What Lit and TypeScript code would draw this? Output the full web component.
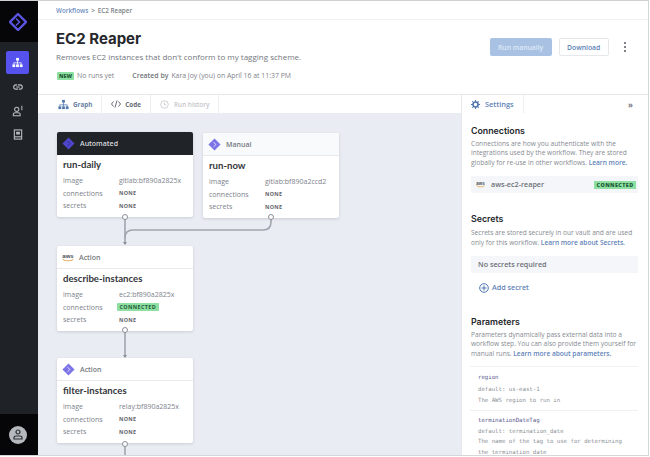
import { LitElement, html, css, svg } from "lit";
import { customElement } from "lit/decorators.js";

type Node = {
  x: number;
  y: number;
  kind: string;
  name: string;
  image: string;
  icon: "diamond" | "aws";
  dark?: boolean;
  connected?: boolean;
  manual?: boolean;
};

const NODES: Node[] = [
  { x: 19, y: 19, kind: "Automated", name: "run-daily", image: "gitlab:bf890a2825x", icon: "diamond", dark: true },
  { x: 165, y: 20, kind: "Manual", name: "run-now", image: "gitlab:bf890a2ccd2", icon: "diamond", manual: true },
  { x: 19, y: 133, kind: "Action", name: "describe-instances", image: "ec2:bf890a2825x", icon: "aws", connected: true },
  { x: 19, y: 245, kind: "Action", name: "filter-instances", image: "relay:bf890a2825x", icon: "diamond" },
];

const diamond = (fill: string, inner: string) => html`<svg width="13" height="13" viewBox="0 0 14 14">
  <path d="M7 .5 13.500 7 7 13.500.5 7z" fill=${fill}></path>
  <path d="M6 4.500 8.500 7 6 9.500" fill="none" stroke=${inner} stroke-width="1"></path>
</svg>`;

const aws = (w = 12) => html`<svg width=${w} height=${w * 0.75} viewBox="0 0 16 12">
  <text x="8" y="7" text-anchor="middle" font-family="Liberation Sans, sans-serif" font-size="8" font-weight="700" fill="#4d5057">aws</text>
  <path d="M1 8.500c4 2.600 10 2.600 14 0" fill="none" stroke="#e0a24a" stroke-width="1.400"></path>
</svg>`;

const graphIcon = (fill: string) => html`<svg width="11" height="11" viewBox="0 0 12 12" fill=${fill}>
  <rect x="4.500" y="1" width="3" height="3"></rect>
  <rect x="0.500" y="8" width="3" height="3"></rect>
  <rect x="4.500" y="8" width="3" height="3"></rect>
  <rect x="8.500" y="8" width="3" height="3"></rect>
  <path d="M5.600 4h.8v2h4v2h-.8V6.800H6.400V8h-.8V6.800H2.400V8h-.8V6h4z"></path>
</svg>`;

@customElement("workflow-node")
class WorkflowNode extends LitElement {
  static properties = { data: { attribute: false } };
  data!: Node;

  static styles = css`
    :host {
      display: block;
      width: 136px;
      height: 85px;
      background: #fff;
      border-radius: 2px;
      box-shadow: 0 1px 3px rgba(60, 70, 90, 0.18);
      font-family: "Open Sans", sans-serif;
      font-size: 7px;
      color: #7c828c;
    }
    .head {
      height: 22px;
      display: flex;
      align-items: center;
      gap: 5px;
      padding: 0 5px;
      border-bottom: 1px solid #e8eaee;
      font-weight: 600;
      font-size: 7px;
      color: #75797f;
      border-radius: 2px 2px 0 0;
    }
    .head.dark {
      background: #202327;
      color: #d6d8dc;
      border-bottom-color: #202327;
    }
    .head.manual {
      background: #f8fafc;
    }
    .name {
      font-family: "Lato", sans-serif;
      font-weight: 700;
      font-size: 9.600px;
      color: #33363b;
      margin: 3px 6px 2px;
      line-height: 14px;
    }
    .row {
      display: grid;
      grid-template-columns: 56px 1fr;
      align-items: center;
      height: 12.700px;
      padding: 0 6px;
    }
    .none {
      font-size: 5.400px;
      font-weight: 700;
      letter-spacing: 0.3px;
      color: #5f636a;
    }
    .conn {
      justify-self: start;
      margin-left: -2px;
      padding: 1px 2.500px;
      line-height: 6px;
      background: #8ee0a2;
      border-radius: 1px;
      font-size: 5.400px;
      font-weight: 700;
      letter-spacing: 0.4px;
      color: #225c36;
    }
  `;

  render() {
    const d = this.data;
    const icon =
      d.icon === "aws"
        ? aws()
        : d.dark
          ? diamond("#4e46c8", "#2f2a8c")
          : diamond("#7b73e6", "#f0efff");
    return html`
      <div class="head ${d.dark ? "dark" : ""} ${d.manual ? "manual" : ""}">${icon}<span>${d.kind}</span></div>
      <div class="name">${d.name}</div>
      <div class="row"><span>image</span><span>${d.image}</span></div>
      <div class="row">
        <span>connections</span>
        ${d.connected ? html`<span class="conn">CONNECTED</span>` : html`<span class="none">NONE</span>`}
      </div>
      <div class="row"><span>secrets</span><span class="none">NONE</span></div>
    `;
  }
}

@customElement("app-root")
class AppRoot extends LitElement {
  static styles = css`
    :host {
      display: block;
      width: 650px;
      height: 457px;
      overflow: hidden;
      background: #fff;
      font-family: "Open Sans", sans-serif;
    }
    .frame {
      width: 649px;
      height: 455px;
      margin-top: 1px;
      display: grid;
      grid-template-columns: 38px minmax(0, 1fr);
      grid-template-rows: minmax(0, 1fr);
      border-right: 1px solid #d4d6da;
      border-bottom: 1px solid #d4d6da;
      box-sizing: border-box;
      box-shadow: 0 -1px 0 #cfd1d5;
    }
    .side {
      background: #1f2327;
      display: flex;
      flex-direction: column;
      align-items: center;
    }
    .logo,
    .account {
      width: 100%;
      height: 41px;
      background: #060608;
      display: flex;
      align-items: center;
      justify-content: center;
      flex: none;
      padding-right: 3px;
      box-sizing: border-box;
    }
    .nav {
      flex: 1;
      display: flex;
      flex-direction: column;
      align-items: center;
      padding: 9px 3px 0 0;
      gap: 1px;
    }
    .nav-item {
      width: 23px;
      height: 23px;
      display: flex;
      align-items: center;
      justify-content: center;
      border-radius: 2px;
    }
    .nav-item.on {
      background: #5552ee;
    }
    .avatar {
      width: 18px;
      height: 18px;
      border-radius: 50%;
      background: #b5b8bd;
      display: flex;
      align-items: center;
      justify-content: center;
    }
    .main {
      min-width: 0;
      min-height: 0;
      display: flex;
      flex-direction: column;
    }
    .crumbs {
      height: 19px;
      box-sizing: border-box;
      padding: 1px 0 0 18px;
      flex: none;
      display: flex;
      align-items: center;
      gap: 3px;
      border-bottom: 1px solid #eef0f3;
      font-size: 6.300px;
      font-weight: 600;
      color: #7a7f87;
    }
    .crumbs a {
      color: #6f8fc0;
    }
    .header {
      height: 75px;
      flex: none;
      display: flex;
      justify-content: space-between;
      padding: 10px 18px 0;
      box-sizing: border-box;
      border-bottom: 1px solid #e6e8ec;
    }
    h1 {
      margin: 0;
      font-family: "Inter", sans-serif;
      font-size: 15px;
      line-height: 18px;
      font-weight: 700;
      color: #26282c;
    }
    .desc {
      margin-top: 3px;
      font-size: 8px;
      line-height: 12px;
      color: #73777e;
    }
    .meta {
      margin-top: 8px;
      display: flex;
      align-items: center;
      font-size: 6.900px;
      line-height: 10px;
      color: #7f838a;
    }
    .new {
      background: #8ee0a2;
      color: #225c36;
      font-size: 5.400px;
      font-weight: 800;
      line-height: 7px;
      padding: 0.5px 2px;
      margin-left: 1px;
      margin-right: 3px;
      border-radius: 1px;
    }
    .meta b {
      margin-left: 18px;
      margin-right: 3px;
      font-weight: 600;
      color: #6f7379;
    }
    .actions {
      display: flex;
      align-items: center;
      align-self: flex-start;
      margin-top: 8px;
    }
    .btn {
      height: 18px;
      display: flex;
      align-items: center;
      justify-content: center;
      box-sizing: border-box;
      border-radius: 2px;
      font-size: 6.800px;
      font-weight: 600;
    }
    .btn.run {
      width: 62px;
      background: #a9c2e3;
      color: #dfe9f6;
    }
    .btn.dl {
      width: 50px;
      margin-left: 7px;
      border: 1px solid #e5e7ea;
      color: #5a7fb5;
    }
    .more {
      margin-left: 15px;
      margin-right: 4px;
      display: flex;
      flex-direction: column;
      gap: 1.600px;
    }
    .more i {
      width: 2.400px;
      height: 2.400px;
      border-radius: 50%;
      background: #55595f;
    }
    .tabs {
      height: 18px;
      flex: none;
      display: grid;
      grid-template-columns: 423px 1fr;
      font-size: 6.300px;
      font-weight: 700;
    }
    .tab-left,
    .tab-right {
      display: flex;
    }
    .tab-right {
      border-left: 1px solid #e6e8ec;
    }
    .tab {
      display: flex;
      align-items: center;
      gap: 4px;
      padding: 0 9px 0 20px;
      border-right: 1px solid #eceef1;
      color: #6a7fa4;
    }
    .tab.code {
      padding: 0 9px;
      color: #656a72;
    }
    .tab.off {
      padding: 0 9px;
      gap: 5px;
      font-size: 6.400px;
      font-weight: 600;
      color: #c3c6cb;
    }
    .tab.settings {
      padding: 0 9px;
      gap: 5px;
      font-size: 7.400px;
      font-weight: 600;
      color: #5f83b8;
    }
    .collapse {
      margin-left: auto;
      padding-right: 15px;
      align-self: center;
      color: #70747b;
      font-size: 8px;
    }
    .body {
      flex: 1;
      min-height: 0;
      display: grid;
      grid-template-columns: 423px minmax(0, 1fr);
    }
    .canvas {
      position: relative;
      background: #e9ecf2;
      overflow: hidden;
    }
    .canvas workflow-node {
      position: absolute;
    }
    .canvas svg.links {
      position: absolute;
      inset: 0;
    }
    .panel {
      padding: 12px 10px 0 8px;
      overflow: hidden;
      border-left: 1px solid #e6e8ec;
      font-size: 6.600px;
      line-height: 9.400px;
      color: #868a91;
    }
    h2 {
      margin: 0 0 2px 1px;
      font-family: "Inter", sans-serif;
      font-size: 8.800px;
      line-height: 12px;
      font-weight: 600;
      color: #25272b;
    }
    p {
      margin: 0 0 0 1px;
      white-space: nowrap;
    }
    .link {
      color: #5f83b8;
      font-weight: 600;
    }
    .strip {
      height: 17px;
      margin: 9px 0 0 1px;
      background: #f4f6f9;
      display: flex;
      align-items: center;
      font-weight: 600;
      font-size: 7.200px;
      color: #6c7077;
      padding: 0 2px 0 5px;
    }
    .strip span.label {
      margin-left: 6px;
    }
    .strip .conn {
      margin-left: auto;
      background: #8ee0a2;
      color: #225c36;
      font-size: 5.400px;
      font-weight: 800;
      letter-spacing: 0.4px;
      padding: 1px 2.500px;
      line-height: 6px;
    }
    .secrets {
      margin-top: 20px;
    }
    .secrets h2 {
      margin-bottom: 3px;
    }
    .none-row {
      margin-top: 9px;
    }
    .none-row span {
      margin-left: 2px;
    }
    .add {
      display: flex;
      align-items: center;
      gap: 3px;
      margin: 10px 0 0 9px;
      font-weight: 600;
      font-size: 7.200px;
      color: #5f83b8;
    }
    .params {
      margin-top: 23px;
    }
    .param {
      border-top: 1px solid #eff1f4;
      padding: 4px 8px 0;
      font-family: "DejaVu Sans Mono", monospace;
      font-size: 5.700px;
      line-height: 10.600px;
      color: #8c9096;
      white-space: nowrap;
    }
    .param.first {
      margin-top: 8px;
      padding: 5px 8px 4px;
      line-height: 11.300px;
    }
    .param .key {
      color: #5b5a8e;
    }
  `;

  renderLinks() {
    const arrow = (x: number, y: number) =>
      svg`<path d="M${x - 2} ${y - 2}h4l-2 3z" fill="#8a8f97" stroke="none"></path>`;
    return svg`<svg class="links" width="423" height="342" fill="none" stroke="#a0a5ad" stroke-width="1.600">
      <path d="M87 104V130"></path>
      <path d="M233 104v5q0 8-8 8H95q-8 0-8 8"></path>
      <path d="M87 217V243"></path>
      <path d="M87 331V342"></path>
      ${arrow(87, 131)}${arrow(87, 244)}
    </svg>`;
  }

  renderRings() {
    const spots = [[87, 104], [233, 104], [87, 217], [87, 331]];
    return svg`<svg class="links" width="423" height="342" fill="#fff" stroke="#8a8f97" stroke-width="1">
      ${spots.map(([x, y]) => svg`<circle cx=${x} cy=${y} r="2.500"></circle>`)}
    </svg>`;
  }

  render() {
    return html`
      <div class="frame">
        <aside class="side">
          <div class="logo">
            <svg width="18" height="18" viewBox="0 0 18 18">
              <path d="M9 1 17 9 9 17 1 9z" fill="none" stroke="#5a55e0" stroke-width="2.400"></path>
              <path d="M7 5.500 10.500 9 7 12.500" fill="none" stroke="#5a55e0" stroke-width="1.600"></path>
            </svg>
          </div>
          <nav class="nav">
            <div class="nav-item on">${graphIcon("#fff")}</div>
            <div class="nav-item">
              <svg width="12" height="10" viewBox="0 0 14 10" fill="none" stroke="#b9bcc1" stroke-width="1.300">
                <path d="M6 2.500H4.500a2.500 2.500 0 0 0 0 5H7"></path>
                <path d="M8 7.500h1.500a2.500 2.500 0 0 0 0-5H7"></path>
                <path d="M5 5h4"></path>
              </svg>
            </div>
            <div class="nav-item">
              <svg width="12" height="12" viewBox="0 0 14 14" fill="none" stroke="#b9bcc1" stroke-width="1.200">
                <circle cx="5.500" cy="5" r="2.500"></circle>
                <path d="M1.500 12.500v-1.500q0-2 2.500-2h3q2.500 0 2.500 2v1.500z"></path>
                <path d="M11.500 1v5"></path>
              </svg>
            </div>
            <div class="nav-item">
              <svg width="10" height="11" viewBox="0 0 10 12" fill="none" stroke="#b9bcc1" stroke-width="1.200">
                <rect x="1" y="1" width="8" height="10"></rect>
                <rect x="3" y="3" width="4" height="3" fill="#b9bcc1" stroke="none"></rect>
                <path d="M1 8.500h8"></path>
              </svg>
            </div>
          </nav>
          <div class="account">
            <div class="avatar">
              <svg width="10" height="11" viewBox="0 0 10 11" fill="none" stroke="#2a2d31" stroke-width="1.200">
                <circle cx="5" cy="3" r="2"></circle>
                <path d="M1 10V8.500Q1 7 3 7h4q2 0 2 1.500V10z"></path>
              </svg>
            </div>
          </div>
        </aside>
        <main class="main">
          <div class="crumbs"><a>Workflows</a><span>&gt;</span><span>EC2 Reaper</span></div>
          <header class="header">
            <div>
              <h1>EC2 Reaper</h1>
              <div class="desc">Removes EC2 instances that don't conform to my tagging scheme.</div>
              <div class="meta">
                <span class="new">NEW</span>No runs yet<b>Created by</b>Kara Joy (you) on April 16 at 11:37 PM
              </div>
            </div>
            <div class="actions">
              <div class="btn run">Run manually</div>
              <div class="btn dl">Download</div>
              <div class="more"><i></i><i></i><i></i></div>
            </div>
          </header>
          <div class="tabs">
            <div class="tab-left">
              <div class="tab">${graphIcon("#4f75ad")} Graph</div>
              <div class="tab code">
                <svg width="10" height="8" viewBox="0 0 10 8" fill="none" stroke="#555a62" stroke-width="0.900">
                  <path d="M2.500 1.500 .5 4l2 2.500M7.500 1.500 9.500 4l-2 2.500M6 .5 4 7.500"></path>
                </svg>
                Code
              </div>
              <div class="tab off">
                <svg width="9" height="9" viewBox="0 0 10 10" fill="none" stroke="#c3c6cb" stroke-width="0.900">
                  <circle cx="5" cy="5" r="4.200"></circle>
                  <path d="M5 2.500V5.500H7"></path>
                </svg>
                Run history
              </div>
            </div>
            <div class="tab-right">
              <div class="tab settings">
                <svg width="9" height="9" viewBox="0 0 10 10" fill="none" stroke="#4f75ad">
                  <circle cx="5" cy="5" r="2.800" stroke-width="1.800"></circle>
                  <path d="M5 0v2M5 8v2M0 5h2M8 5h2M1.500 1.500 3 3M7 7l1.500 1.500M8.500 1.500 7 3M3 7 1.500 8.500" stroke-width="1.200"></path>
                </svg>
                Settings
              </div>
              <div class="collapse">»</div>
            </div>
          </div>
          <div class="body">
            <section class="canvas">
              ${this.renderLinks()}
              ${NODES.map(
                (n) => html`<workflow-node .data=${n} style="left:${n.x}px;top:${n.y}px"></workflow-node>`
              )}
              ${this.renderRings()}
            </section>
            <aside class="panel">
              <h2>Connections</h2>
              <p>Connections are how you authenticate with the</p>
              <p>integrations used by the workflow. They are stored</p>
              <p>globally for re-use in other workflows. <span class="link">Learn more.</span></p>
              <div class="strip">
                ${aws(9)}<span class="label">aws-ec2-reaper</span><span class="conn">CONNECTED</span>
              </div>
              <div class="secrets">
                <h2>Secrets</h2>
                <p>Secrets are stored securely in our vault and are used</p>
                <p>only for this workflow. <span class="link">Learn more about Secrets.</span></p>
                <div class="strip none-row"><span>No secrets required</span></div>
                <div class="add">
                  <svg width="10" height="10" viewBox="0 0 10 10" fill="none" stroke="#4f75ad" stroke-width="1">
                    <circle cx="5" cy="5" r="4.300"></circle>
                    <path d="M5 2.500v5M2.500 5h5"></path>
                  </svg>
                  Add secret
                </div>
              </div>
              <div class="params">
                <h2>Parameters</h2>
                <p>Parameters dynamically pass external data into a</p>
                <p>workflow step. You can also provide them yourself for</p>
                <p>manual runs. <span class="link">Learn more about parameters.</span></p>
                <div class="param first">
                  <div class="key">region</div>
                  <div>default: us-east-1</div>
                  <div>The AWS region to run in</div>
                </div>
                <div class="param">
                  <div class="key">terminationDateTag</div>
                  <div>default: termination_date</div>
                  <div>The name of the tag to use for determining</div>
                  <div>the termination date</div>
                </div>
              </div>
            </aside>
          </div>
        </main>
      </div>
    `;
  }
}
